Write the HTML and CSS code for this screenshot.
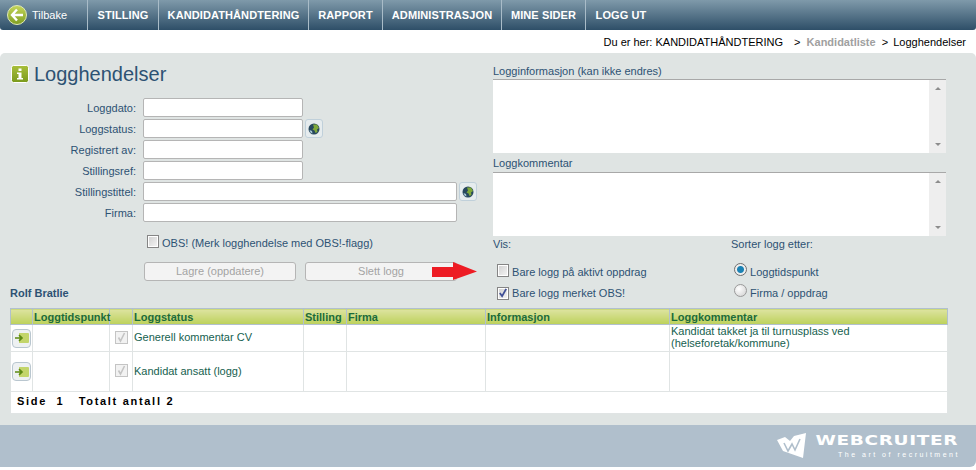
FILE: index.html
```html
<!DOCTYPE html>
<html lang="en">
<head>
  <meta charset="UTF-8">
  <title>Logghendelser</title>
  <link rel="stylesheet" href="styles.css">
</head>
<body>

  <!-- Top menu -->
  <nav class="topnav">
    <a class="back" href="#">
      <svg width="20" height="20" viewBox="0 0 20 20">
        <defs>
          <linearGradient id="backfill" x1="0" y1="0" x2="0" y2="1">
            <stop offset="0" stop-color="#c5d65a"/>
            <stop offset="1" stop-color="#7f9e22"/>
          </linearGradient>
        </defs>
        <circle cx="10" cy="10" r="9.5" fill="url(#backfill)" stroke="#dfe8b8"/>
        <path d="M10 4.5 L5 10 L10 15.5 M5.5 10 H16" fill="none" stroke="#fff" stroke-width="2.4"/>
      </svg>
      Tilbake
    </a>
    <a class="item w-stilling" href="#">STILLING</a>
    <a class="item w-kandidat" href="#">KANDIDATHÅNDTERING</a>
    <a class="item w-rapport" href="#">RAPPORT</a>
    <a class="item w-admin" href="#">ADMINISTRASJON</a>
    <a class="item w-mine" href="#">MINE SIDER</a>
    <a class="item w-logg" href="#">LOGG UT</a>
  </nav>

  <div class="crumbs">
    Du er her: KANDIDATHÅNDTERING <span class="sep">&gt;</span> <b>Kandidatliste</b> <span class="sep2">&gt;</span> Logghendelser
  </div>

  <!-- Main panel -->
  <main class="panel">
    <div class="columns">
      <div class="left">
        <h1 class="title">
          <svg width="18" height="18" viewBox="0 0 18 18">
            <defs>
              <linearGradient id="infofill" x1="0" y1="0" x2="0" y2="1">
                <stop offset="0" stop-color="#a9bf3c"/>
                <stop offset="1" stop-color="#7a9a1c"/>
              </linearGradient>
            </defs>
            <rect x="0.5" y="0.5" width="17" height="17" rx="2" fill="url(#infofill)" stroke="#fff"/>
            <path d="M7.5 3.5 H10.5 V6 H7.5 Z M6 7.5 H10.5 V13 H12 V14.5 H6 V13 H7.5 V9 H6 Z" fill="#fff"/>
          </svg>
          Logghendelser
        </h1>

        <div class="row"><label>Loggdato:</label><input class="short" type="text"></div>
        <div class="row">
          <label>Loggstatus:</label><input class="short" type="text">
          <button class="globe">
            <svg width="12" height="12" viewBox="0 0 12 12">
              <circle cx="6" cy="6" r="5.5" fill="#27485e"/>
              <path d="M5 1.5 L9 1.5 L11 5 L9 6.5 L9.5 9 L7.5 10 L6.5 7.5 L4.5 6.5 L6 4.5 Z" fill="#7ea83a"/>
              <path d="M1.5 7 L4 8 L4.5 10.5 L2.5 9.5 Z" fill="#a9c9d8"/>
            </svg>
          </button>
        </div>
        <div class="row"><label>Registrert av:</label><input class="short" type="text"></div>
        <div class="row"><label>Stillingsref:</label><input class="short" type="text"></div>
        <div class="row">
          <label>Stillingstittel:</label><input class="long" type="text">
          <button class="globe">
            <svg width="12" height="12" viewBox="0 0 12 12">
              <circle cx="6" cy="6" r="5.5" fill="#27485e"/>
              <path d="M5 1.5 L9 1.5 L11 5 L9 6.5 L9.5 9 L7.5 10 L6.5 7.5 L4.5 6.5 L6 4.5 Z" fill="#7ea83a"/>
              <path d="M1.5 7 L4 8 L4.5 10.5 L2.5 9.5 Z" fill="#a9c9d8"/>
            </svg>
          </button>
        </div>
        <div class="row"><label>Firma:</label><input class="long" type="text"></div>

        <div class="obs"><span class="check"></span> OBS! (Merk logghendelse med OBS!-flagg)</div>

        <div class="buttons">
          <button class="btn">Lagre (oppdatere)</button>
          <button class="btn">Slett logg</button>
        </div>

        <h3 class="person">Rolf Bratlie</h3>
      </div>

      <div class="right">
        <div class="caption">Logginformasjon (kan ikke endres)</div>
        <div class="memo tall">
          <div class="memo-text"></div>
          <div class="scroll"><i class="up"></i><i class="down"></i></div>
        </div>
        <div class="caption second">Loggkommentar</div>
        <div class="memo">
          <div class="memo-text"></div>
          <div class="scroll"><i class="up"></i><i class="down"></i></div>
        </div>

        <div class="options">
          <div class="vis">
            <div class="opt-head">Vis:</div>
            <div class="opt"><span class="check"></span> Bare logg på aktivt oppdrag</div>
            <div class="opt">
              <span class="check on">
                <svg width="10" height="10" viewBox="0 0 11 11"><path d="M2 5.5 L4.5 9 L9 1" fill="none" stroke="#3f4f96" stroke-width="2"/></svg>
              </span>
              Bare logg merket OBS!
            </div>
          </div>
          <div class="sort">
            <div class="opt-head">Sorter logg etter:</div>
            <div class="opt"><span class="radio on"></span> Loggtidspunkt</div>
            <div class="opt"><span class="radio"></span> Firma / oppdrag</div>
          </div>
        </div>
      </div>

      <!-- arrow pasted on top of the screenshot -->
      <svg class="arrow" width="45" height="18" viewBox="0 0 45 18">
        <path d="M0 5 H21 V0 L45 9.5 L21 18 V15 H0 Z" fill="#ed1c24"/>
      </svg>
    </div>

    <table class="log">
      <colgroup>
        <col class="c1"><col class="c2"><col class="c3"><col class="c4"><col class="c5"><col class="c6"><col class="c7"><col class="c8">
      </colgroup>
      <tr>
        <th></th><th>Loggtidspunkt</th><th></th><th>Loggstatus</th><th>Stilling</th><th>Firma</th><th>Informasjon</th><th>Loggkommentar</th>
      </tr>
      <tr class="r1">
        <td class="open"><span class="go"><svg width="14" height="10" viewBox="0 0 14 10"><path d="M4 0 H13 Q14 0 14 1 V9 Q14 10 13 10 H4 Z" fill="#c3d56a"/><path d="M0 5 H6 M4 2.2 L7 5 L4 7.8" fill="none" stroke="#5e8a14" stroke-width="1.6"/></svg></span></td>
        <td></td>
        <td class="flag"><span class="check off"><svg width="11" height="11" viewBox="0 0 11 11"><path d="M2.5 5.5 L4.5 9 L8.5 1" fill="none" stroke="#c4c4c4" stroke-width="1.6"/></svg></span></td>
        <td>Generell kommentar CV</td>
        <td></td><td></td><td></td>
        <td>Kandidat takket ja til turnusplass ved (helseforetak/kommune)</td>
      </tr>
      <tr class="r2">
        <td class="open"><span class="go"><svg width="14" height="10" viewBox="0 0 14 10"><path d="M4 0 H13 Q14 0 14 1 V9 Q14 10 13 10 H4 Z" fill="#c3d56a"/><path d="M0 5 H6 M4 2.2 L7 5 L4 7.8" fill="none" stroke="#5e8a14" stroke-width="1.6"/></svg></span></td>
        <td></td>
        <td class="flag"><span class="check off"><svg width="11" height="11" viewBox="0 0 11 11"><path d="M2.5 5.5 L4.5 9 L8.5 1" fill="none" stroke="#c4c4c4" stroke-width="1.6"/></svg></span></td>
        <td>Kandidat ansatt (logg)</td>
        <td></td><td></td><td></td><td></td>
      </tr>
      <tr class="pager">
        <td colspan="8">Side&nbsp; 1&nbsp;&nbsp; Totalt antall 2</td>
      </tr>
    </table>
  </main>

  <footer class="foot">
    <div class="brand">
      <svg width="30" height="26" viewBox="0 0 30 26">
        <path d="M0 7 L8 4 L13 8 L17 3 L29 0 L26 25 L6 18 Z" fill="#fff"/>
        <path d="M7 10 L11 18 L15 11 L18 17 L23 6" fill="none" stroke="#b0bfcc" stroke-width="1.6"/>
      </svg>
      <div class="brand-text">
        <div class="brand-name"><span>WEBCRUITER</span></div>
        <div class="brand-sub">The art of recruitment</div>
      </div>
    </div>
  </footer>

</body>
</html>
```

FILE: styles.css
```css
body {
  margin: 0;
  height: 470px;
  overflow: hidden;
  background: #fff;
  font-family: "Liberation Sans", Arial, sans-serif;
  font-size: 11px;
  color: #2d5273;
}

.topnav {
  height: 30px;
  display: flex;
  background: linear-gradient(to bottom, #7f9aaa, #2e4f68);
  border-radius: 0 0 3px 3px;
}

.topnav a {
  display: flex;
  align-items: center;
  color: #fff;
  text-decoration: none;
}

.back {
  width: 88px;
  box-sizing: border-box;
  padding-left: 7px;
  gap: 5px;
  border-right: 1px solid #a9bcc8;
}

.item {
  box-sizing: border-box;
  justify-content: center;
  font-weight: bold;
  letter-spacing: 0.1px;
  border-right: 1px solid #a9bcc8;
}

.w-stilling { width: 71px; }
.w-kandidat { width: 150px; }
.w-rapport { width: 74px; }
.w-admin { width: 119px; }
.w-mine { width: 84px; }
.w-logg { width: 70px; border-right: none; }

.crumbs {
  height: 23px;
  line-height: 25px;
  text-align: right;
  padding-right: 10px;
  color: #000;
}

.crumbs b {
  color: #a0a0a0;
}

.crumbs .sep {
  margin: 0 3px 0 8px;
}

.crumbs .sep2 {
  margin: 0 2px 0 3px;
}

.panel {
  height: 372px;
  box-sizing: border-box;
  background: #dfe4e3;
  padding: 10px 0 0 10px;
  border-radius: 5px 5px 0 0;
}

.columns {
  position: relative;
  display: flex;
  height: 245px;
}

.left {
  width: 483px;
  flex-shrink: 0;
}

.title {
  display: flex;
  align-items: center;
  gap: 5px;
  margin: 1px 0 14px 1px;
  height: 20px;
  font-weight: normal;
  font-size: 20px;
  color: #2d5273;
}

.row {
  display: flex;
  align-items: center;
  height: 19px;
  margin-bottom: 2px;
}

.row label {
  width: 126px;
  text-align: right;
  margin-right: 7px;
}

input {
  box-sizing: border-box;
  height: 19px;
  padding: 0 3px;
  border: 1px solid #b5b5b5;
  border-radius: 2px;
  background: #fff;
}

.short { width: 160px; }
.long { width: 314px; }

.globe {
  width: 18px;
  height: 19px;
  margin-left: 2px;
  padding: 0;
  border: 1px solid #c0d0da;
  border-radius: 3px;
  background: #e6ecee;
  display: flex;
  align-items: center;
  justify-content: center;
}

.check {
  display: inline-flex;
  align-items: center;
  justify-content: center;
  box-sizing: border-box;
  width: 12px;
  height: 13px;
  border: 1px solid #858585;
  box-shadow: inset 0 0 0 1px #fff;
  background: linear-gradient(135deg, #cfcfcf, #f6f6f6);
  vertical-align: -1px;
}

.check.off {
  width: 13px;
  border-color: #c4c4c4;
  box-shadow: none;
  background: #f2f2f2;
}

.obs {
  margin: 13px 0 0 137px;
  height: 15px;
  line-height: 15px;
}

.buttons {
  display: flex;
  gap: 9px;
  margin: 12px 0 0 134px;
}

.btn {
  box-sizing: border-box;
  width: 152px;
  height: 19px;
  padding: 0 0 2px;
  border: 1px solid #b5b5b5;
  border-radius: 3px;
  background: #f3f3f3;
  color: #a3a3a3;
  font-family: "Liberation Sans", Arial, sans-serif;
  font-size: 11px;
}

.person {
  margin: 5px 0 0 0;
  font-size: 11px;
  line-height: 14px;
  color: #2d5273;
}

.right {
  width: 453px;
}

.caption {
  margin-top: 1px;
  height: 15px;
  line-height: 15px;
}

.caption.second {
  margin-top: 3px;
  height: 16px;
}

.memo {
  display: flex;
  height: 64px;
  border-top: 1px solid #a8a8a8;
  box-sizing: border-box;
}

.memo.tall {
  height: 74px;
}

.memo-text {
  flex: 1;
  background: #fff;
}

.scroll {
  width: 17px;
  background: #eeeeee;
  display: flex;
  flex-direction: column;
  justify-content: space-between;
  align-items: center;
  padding: 7px 0;
  box-sizing: border-box;
}

.scroll i {
  width: 0;
  height: 0;
  border-left: 3px solid transparent;
  border-right: 3px solid transparent;
}

.scroll .up { border-bottom: 3px solid #8c8c8c; }
.scroll .down { border-top: 3px solid #8c8c8c; }

.options {
  display: flex;
  margin-top: 1px;
}

.vis {
  width: 238px;
}

.opt-head {
  height: 15px;
  line-height: 15px;
  margin-bottom: 11px;
}

.opt {
  height: 21px;
  line-height: 18px;
  padding-left: 4px;
}

.radio {
  display: inline-block;
  box-sizing: border-box;
  width: 13px;
  height: 13px;
  border: 1px solid #9a9a9a;
  border-radius: 50%;
  background: radial-gradient(circle at 35% 35%, #fff, #cfcfcf);
  vertical-align: 0;
}

.radio.on {
  background: radial-gradient(circle, #1b82b4 0 3px, #eee 4px);
  border-color: #6f6f6f;
}

.sort .opt {
  padding-left: 3px;
}

.arrow {
  position: absolute;
  left: 422px;
  top: 199px;
}

.log {
  width: 938px;
  table-layout: fixed;
  border-collapse: collapse;
  background: #fff;
  border: 1px solid #b1c0ce;
  color: #16614f;
}

.c1 { width: 22px; }
.c2 { width: 77px; }
.c3 { width: 23px; }
.c4 { width: 171px; }
.c5 { width: 43px; }
.c6 { width: 139px; }
.c7 { width: 184px; }

.log th {
  height: 15px;
  padding: 0 0 0 1px;
  text-align: left;
  font-size: 11px;
  color: #1c6b3a;
  background: linear-gradient(to bottom, #dde3a0, #bcd15a);
  border: 1px solid #b1c0ce;
  border-width: 0 1px 1px 1px;
  white-space: nowrap;
}

.log td {
  padding: 0 1px 2px;
  border: 1px solid #e0e4e4;
  line-height: 12px;
  font-size: 11px;
}

.r1 { height: 27px; }
.r2 { height: 40px; }

.open, .flag {
  text-align: center;
}

.go {
  display: inline-flex;
  align-items: center;
  justify-content: center;
  box-sizing: border-box;
  width: 19px;
  height: 19px;
  border: 1px solid #b9c6cf;
  border-radius: 4px;
  background: #eef1f2;
  vertical-align: middle;
}

.log td.open {
  padding: 0;
}

.log .pager td {
  height: 22px;
  padding: 0 0 3px 6px;
  box-sizing: border-box;
  font-weight: bold;
  letter-spacing: 1.7px;
  color: #000;
}

.foot {
  height: 42px;
  background: #b0bfcc;
  border-radius: 0 0 6px 0;
  display: flex;
  justify-content: flex-end;
}

.brand {
  display: flex;
  align-items: flex-start;
  gap: 31px;
  margin: 8px 18px 0 0;
  color: #fff;
}

.brand-text {
  width: 120px;
}

.brand-name {
  display: flex;
  justify-content: flex-end;
  font-family: "DejaVu Sans", sans-serif;
  font-weight: bold;
  font-size: 14px;
  line-height: 14px;
  white-space: nowrap;
}

/* logo lettering is much wider than any installed font */
.brand-name span {
  transform: scaleX(1.32);
  transform-origin: right center;
  letter-spacing: 0.5px;
}

.brand-sub {
  margin-top: 3px;
  text-align: right;
  font-size: 7px;
  line-height: 9px;
  letter-spacing: 2.5px;
  white-space: nowrap;
}
```
